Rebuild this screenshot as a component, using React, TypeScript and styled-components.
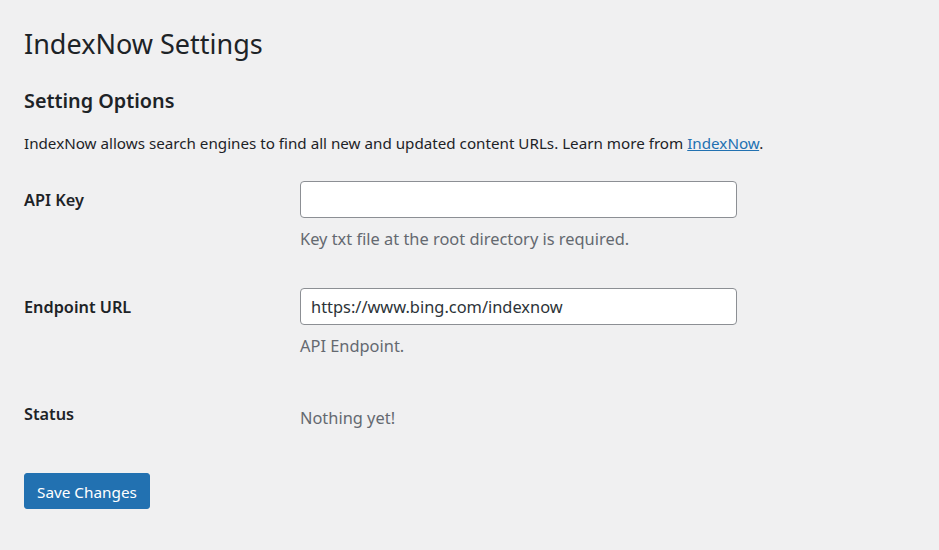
import styled, { createGlobalStyle } from 'styled-components'

const GlobalStyle = createGlobalStyle`
  html, body {
    margin: 0;
    background: #f0f0f1;
  }
  body {
    font-family: 'Noto Sans', 'Open Sans', sans-serif;
    color: #1d2327;
    font-size: 15px;
  }
`

const Wrap = styled.div`
  padding: 26px 24px 40px;
`

const Title = styled.h1`
  margin: 0;
  font-size: 27px;
  font-weight: 400;
  line-height: 36px;
`

const SectionTitle = styled.h2`
  margin: 26px 0 0;
  font-size: 19.8px;
  font-weight: 600;
  line-height: 26px;
`

const Intro = styled.p`
  margin: 17px 0 7px;
  font-size: 15.2px;
  line-height: 25px;
`

const Link = styled.a`
  color: #2271b1;
  text-decoration: underline;
`

const FormTable = styled.div`
  display: grid;
  grid-template-columns: 276px 1fr;
`

const Th = styled.div`
  padding: 26px 12px 22px 0;
  font-size: 16.3px;
  font-weight: 600;
  line-height: 22px;
`

const Td = styled.div<{ $top?: number }>`
  padding: ${(p) => p.$top ?? 18}px 0 19px;
  line-height: 25px;
`

const Input = styled.input`
  display: block;
  box-sizing: border-box;
  width: 437px;
  height: 37px;
  margin: 0;
  padding: 0 10px;
  border: 1px solid #8c8f94;
  border-radius: 4px;
  background: #fff;
  color: #2c3338;
  font-family: inherit;
  font-size: 16.4px;
  outline: none;
`

const Description = styled.p`
  margin: 8px 0 0;
  color: #646970;
  font-size: 16.4px;
  line-height: 25px;
`

const StatusText = styled.span`
  color: #646970;
  font-size: 16.4px;
`

const Submit = styled.div`
  margin-top: 23px;
`

const Button = styled.button`
  box-sizing: border-box;
  height: 36px;
  padding: 2px 12px 0;
  border: 1px solid #2271b1;
  border-radius: 3px;
  background: #2271b1;
  color: #fff;
  font-family: inherit;
  font-size: 15.3px;
  cursor: pointer;
`

export default function App() {
  return (
    <Wrap>
      <GlobalStyle />
      <Title>IndexNow Settings</Title>
      <SectionTitle>Setting Options</SectionTitle>
      <Intro>
        IndexNow allows search engines to find all new and updated content URLs. Learn more from{' '}
        <Link href="#">IndexNow</Link>.
      </Intro>
      <FormTable>
        <Th>API Key</Th>
        <Td>
          <Input type="text" defaultValue="" />
          <Description>Key txt file at the root directory is required.</Description>
        </Td>
        <Th>Endpoint URL</Th>
        <Td>
          <Input type="text" defaultValue="https://www.bing.com/indexnow" />
          <Description>API Endpoint.</Description>
        </Td>
        <Th>Status</Th>
        <Td $top={28}>
          <StatusText>Nothing yet!</StatusText>
        </Td>
      </FormTable>
      <Submit>
        <Button type="button">Save Changes</Button>
      </Submit>
    </Wrap>
  )
}
